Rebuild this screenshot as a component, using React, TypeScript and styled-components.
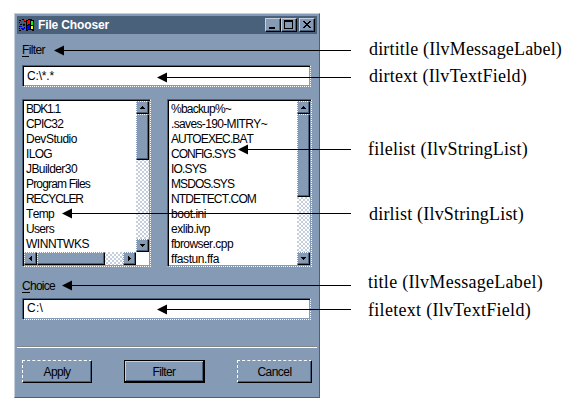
import React, { useLayoutEffect, useRef, useState } from 'react';
import styled, { createGlobalStyle, css } from 'styled-components';

const face = '#849ab5';
const shade = '#4a617b';
const light = '#c6cfde';

const GlobalStyle = createGlobalStyle`
  body { margin: 0; background: #fff; }
  * { box-sizing: border-box; }
`;

const Page = styled.main`
  position: relative;
  width: 570px;
  height: 412px;
  padding: 13px 0 0 14px;
  overflow: hidden;
  background: #fff;
  color: #000;
  font: 12px/15px 'Liberation Sans', Arial, sans-serif;
  font-kerning: none;
`;

const Dialog = styled.section`
  display: flex;
  flex-direction: column;
  width: 306px;
  height: 385px;
  padding: 2px;
  background: ${face};
  border: 1px solid ${shade};
  border-top-color: ${light};
  border-left-color: ${light};
`;

const TitleBar = styled.header`
  display: flex;
  align-items: center;
  flex: none;
  height: 18px;
  padding: 0 2px;
  background: ${shade};
  color: #fff;
  font-weight: bold;
`;

const Title = styled.div`
  flex: 1;
  padding-left: 3px;
`;

const WindowButton = styled.button<{ $apart?: boolean }>`
  width: 16px;
  height: 14px;
  padding: 0;
  margin-left: ${p => (p.$apart ? 2 : 0)}px;
  border: 1px solid #000;
  border-top-color: ${light};
  border-left-color: ${light};
  background: ${face};
  box-shadow: inset -1px -1px ${shade};
  svg { display: block; }
`;

const Caption = styled.div`
  display: flex;
  height: 15px;
  margin-left: 5px;
`;

const Access = styled.u`
  text-decoration: none;
  box-shadow: 0 -1px #000 inset;
`;

const sunken = css`
  border: 1px dotted #fff;
  border-top: 1px solid ${shade};
  border-left: 1px solid ${shade};
  background: #fff;
  background-clip: padding-box;
  box-shadow: inset 1px 1px #000, inset -1px -1px ${face};
`;

const Field = styled.div`
  ${sunken}
  flex: none;
  width: 289px;
  height: 22px;
  margin-left: 5px;
  padding: 3px 0 0 4px;
`;

const Lists = styled.div`
  display: flex;
  flex: none;
  gap: 16px;
  height: 168px;
  margin: 12px 0 0 5px;
`;

const ListBox = styled.div<{ $width: number }>`
  ${sunken}
  display: grid;
  grid-template-columns: 1fr 13px;
  width: ${p => p.$width}px;
  padding: 1px;
`;

const Items = styled.ul<{ $height: number }>`
  height: ${p => p.$height}px;
  margin: 0;
  padding: 0 0 0 2px;
  list-style: none;
  overflow: hidden;
`;

const Item = styled.li`
  height: 15px;
  padding-top: 1px;
`;

const Track = styled.div<{ $row?: boolean }>`
  display: flex;
  flex-direction: ${p => (p.$row ? 'row' : 'column')};
  background: repeating-conic-gradient(#fff 0 25%, #c6cfde 0 50%) 0 0 / 4px 4px;
`;

const Knob = styled.div<{ $w: number; $h: number; $end?: boolean }>`
  flex: none;
  width: ${p => p.$w}px;
  height: ${p => p.$h}px;
  margin: ${p => (p.$end ? 'auto 0 0 auto' : '0')};
  border: 1px solid #000;
  border-top: 1px dotted #fff;
  border-left: 1px dotted #fff;
  background: ${face};
  box-shadow: inset -1px -1px ${shade};
  svg { display: block; }
`;

const Separator = styled.hr`
  flex: none;
  width: 300px;
  height: 2px;
  margin: 26px 0 0;
  border: 0;
  border-top: 1px solid #848684;
  background: #fff;
`;

const Actions = styled.div`
  display: flex;
  justify-content: space-between;
  margin: 12px 5px 0;
`;

const PushButton = styled.button<{ $width: number; $default?: boolean }>`
  display: flex;
  justify-content: center;
  width: ${p => p.$width}px;
  height: 23px;
  padding: 4px 0 0;
  color: #000;
  font: inherit;
  background: ${face};
  ${p =>
    p.$default
      ? css`
          border: 1px solid #000;
          border-width: 1px 2px 2px 1px;
          box-shadow: inset 1px 1px ${light}, inset -1px -1px ${shade};
        `
      : css`
          border: 1px solid #000;
          border-top: 1px dashed #fff;
          border-left: 1px dashed #fff;
          box-shadow: inset -1px -1px ${shade};
        `}
`;

const Overlay = styled.svg`
  position: absolute;
  inset: 0;
  pointer-events: none;
`;

const Note = styled.div<{ $x: number; $baseline: number }>`
  position: absolute;
  left: ${p => p.$x}px;
  top: ${p => p.$baseline - 16}px;
  font: 18px/20px 'Liberation Serif', 'Times New Roman', serif;
`;

const Run = styled.span`
  display: inline-block;
  white-space: pre;
`;

/** One line of text tracked so that it fills the given width. */
function Fit({ width, children }: { width: number; children: React.ReactNode }) {
  const ref = useRef<HTMLSpanElement>(null);
  const [tracking, setTracking] = useState(0);
  useLayoutEffect(() => {
    const el = ref.current;
    if (!el) return;
    const count = (el.textContent ?? '').length;
    setTracking((width - el.getBoundingClientRect().width) / count);
  }, [width]);
  return <Run ref={ref} style={{ letterSpacing: tracking }}>{children}</Run>;
}

const arrowPaths = {
  up: 'M3 7h5v-1h-1v-1h-1v-1h-1v1h-1v1h-1z',
  down: 'M3 4h5v1h-1v1h-1v1h-1v-1h-1v-1h-1z',
  left: 'M7 3v5h-1v-1h-1v-1h-1v-1h1v-1h1v-1z',
  right: 'M4 3v5h1v-1h1v-1h1v-1h-1v-1h-1v-1z',
};

function ArrowKnob({ dir }: { dir: keyof typeof arrowPaths }) {
  return (
    <Knob $w={13} $h={13} $end={dir === 'down' || dir === 'right'}>
      <svg width="11" height="11" shapeRendering="crispEdges"><path d={arrowPaths[dir]} /></svg>
    </Knob>
  );
}

function WindowsLogo() {
  return (
    <svg width="16" height="14" viewBox="0 0 16 14" shapeRendering="crispEdges">
      <path d="M0 2h2v1H0zM3 1h2v1H3zM0 4h1v1H0zM5 3h2v1H5zM1 6h2v1H1zM4 6h2v1H4zM0 8h1v1H0zM0 10h1v1H0zM5 9h1v1H5zM0 12h2v1H0zM3 11h2v1H3z" />
      <path d="M1 3h2v1H1zM4 2h2v1H4zM2 5h1v1H2zM4 5h2v1H4z" fill="#f00" />
      <path d="M1 8h2v1H1zM4 7h2v1H4zM2 10h2v1H2zM4 10h2v1H4z" fill="#00f" />
      <path d="M7 2h2V1h4v1h2v11h-2v-1H9v1H7z" />
      <path d="M8 3h1V2h2v4H9v1H8z" fill="#f00" />
      <path d="M12 3h2v4h-2z" fill="#0f0" />
      <path d="M8 8h1V7h2v4H9v1H8z" fill="#00f" />
      <path d="M12 8h2v3h-2z" fill="#ff0" />
    </svg>
  );
}

const folders: [string, number][] = [
  ['BDK1.1', 34], ['CPIC32', 37], ['DevStudio', 51], ['ILOG', 26], ['JBuilder30', 51],
  ['Program Files', 64], ['RECYCLER', 57], ['Temp', 28], ['Users', 28], ['WINNTWKS', 63],
];

const files: [string, number][] = [
  ['%backup%~', 60], ['.saves-190-MITRY~', 96], ['AUTOEXEC.BAT', 82], ['CONFIG.SYS', 64],
  ['IO.SYS', 35], ['MSDOS.SYS', 63], ['NTDETECT.COM', 85], ['boot.ini', 35],
  ['exlib.ivp', 39], ['fbrowser.cpp', 62], ['ffastun.ffa', 48],
];

const notes = [
  { text: 'dirtitle (IlvMessageLabel)', x: 369, width: 193, baseline: 55, line: 50, tip: 54 },
  { text: 'dirtext (IlvTextField)', x: 369, width: 158, baseline: 82, line: 77, tip: 157 },
  { text: 'filelist (IlvStringList)', x: 368, width: 160, baseline: 155, line: 149, tip: 238 },
  { text: 'dirlist (IlvStringList)', x: 369, width: 155, baseline: 220, line: 213, tip: 62 },
  { text: 'title (IlvMessageLabel)', x: 368, width: 175, baseline: 288, line: 285, tip: 62 },
  { text: 'filetext (IlvTextField)', x: 368, width: 163, baseline: 316, line: 309, tip: 157 },
];

const FilterCaption = styled(Caption)`margin-top: 9px;`;
const FilterField = styled(Field)`margin-top: 7px;`;
const ChoiceCaption = styled(Caption)`margin-top: 12px;`;
const ChoiceField = styled(Field)`
  margin-top: 4px;
  padding-top: 2px;
`;

export default function App() {
  return (
    <Page>
      <GlobalStyle />
      <Dialog>
        <TitleBar>
          <WindowsLogo />
          <Title><Fit width={71}>File Chooser</Fit></Title>
          <WindowButton aria-label="Minimize">
            <svg width="14" height="12"><path d="M3 8h6v2H3z" /></svg>
          </WindowButton>
          <WindowButton aria-label="Maximize">
            <svg width="14" height="12" shapeRendering="crispEdges"><path fillRule="evenodd" d="M2 1h9v9H2zM3 3v6h7V3z" /></svg>
          </WindowButton>
          <WindowButton aria-label="Close" $apart>
            <svg width="14" height="12" shapeRendering="crispEdges">
              <path d="M3 2h2v1h1v1h2v-1h1v-1h2v1h-1v1h-1v1h-1v1h1v1h1v1h1v1h-2v-1h-1v-1h-2v1h-1v1h-2v-1h1v-1h1v-1h1v-1h-1v-1h-1v-1h-1z" />
            </svg>
          </WindowButton>
        </TitleBar>
        <FilterCaption><Fit width={23}><Access>F</Access>ilter</Fit></FilterCaption>
        <FilterField><Fit width={27}>{'C:\\*.*'}</Fit></FilterField>
        <Lists>
          <ListBox $width={129}>
            <Items $height={151}>
              {folders.map(([name, w]) => <Item key={name}><Fit width={w}>{name}</Fit></Item>)}
            </Items>
            <Track><ArrowKnob dir="up" /><Knob $w={13} $h={46} /><ArrowKnob dir="down" /></Track>
            <Track $row><ArrowKnob dir="left" /><Knob $w={68} $h={13} /><ArrowKnob dir="right" /></Track>
          </ListBox>
          <ListBox $width={145}>
            <Items $height={164}>
              {files.map(([name, w]) => <Item key={name}><Fit width={w}>{name}</Fit></Item>)}
            </Items>
            <Track><ArrowKnob dir="up" /><Knob $w={13} $h={83} /><ArrowKnob dir="down" /></Track>
          </ListBox>
        </Lists>
        <ChoiceCaption><Fit width={33}><Access>C</Access>hoice</Fit></ChoiceCaption>
        <ChoiceField><Fit width={16}>{'C:\\'}</Fit></ChoiceField>
        <Separator />
        <Actions>
          <PushButton $width={70}><Fit width={27}>Apply</Fit></PushButton>
          <PushButton $width={81} $default><Fit width={23}>Filter</Fit></PushButton>
          <PushButton $width={75}><Fit width={34}>Cancel</Fit></PushButton>
        </Actions>
      </Dialog>
      <Overlay width="570" height="412">
        {notes.map(n => (
          <g key={n.text}>
            <path d={`M${n.tip + 8} ${n.line + 0.5}H351`} stroke="#000" />
            <path d={`M${n.tip} ${n.line + 0.5}l10 -5v10z`} />
          </g>
        ))}
      </Overlay>
      {notes.map(n => (
        <Note key={n.text} $x={n.x} $baseline={n.baseline}><Fit width={n.width}>{n.text}</Fit></Note>
      ))}
    </Page>
  );
}
